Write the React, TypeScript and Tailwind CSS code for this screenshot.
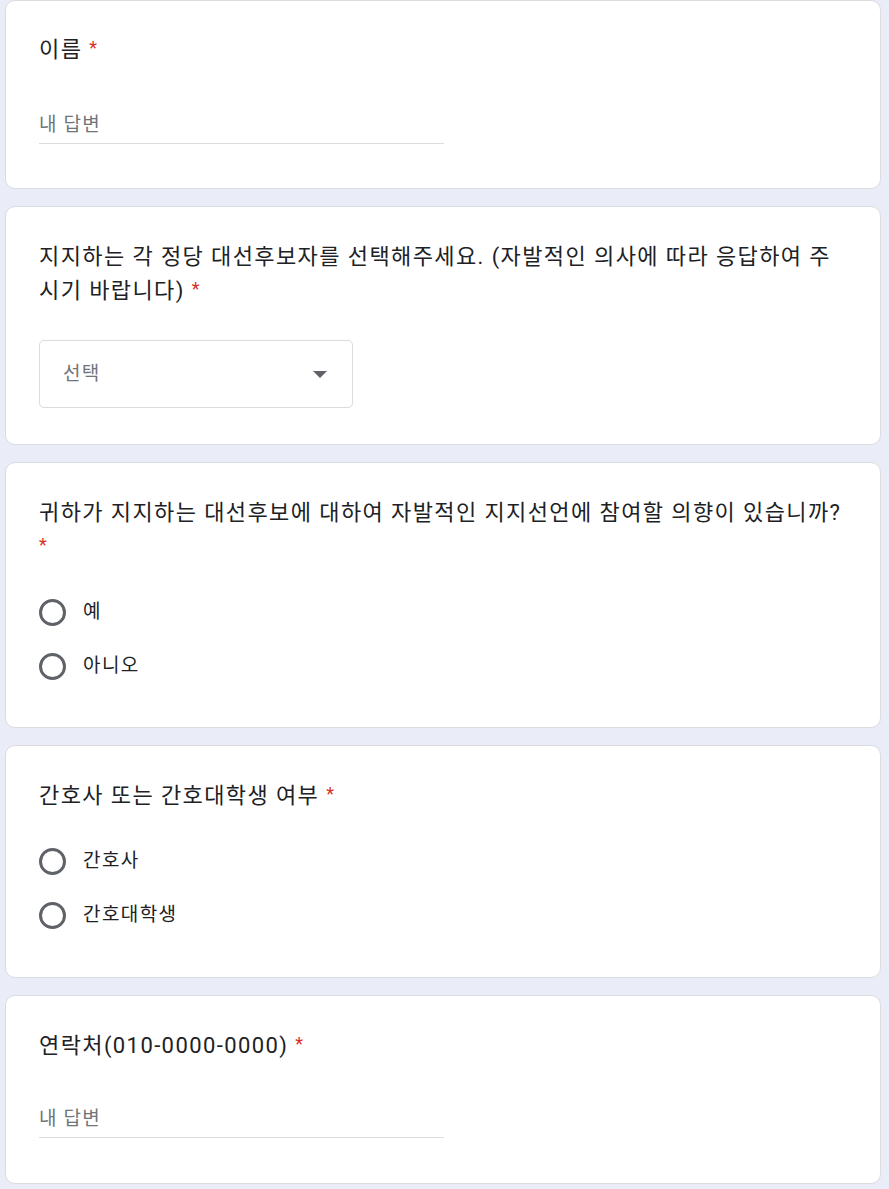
const FONT = "font-['Roboto','Noto_Sans_CJK_KR',sans-serif]";

function Title({ children }: { children: React.ReactNode }) {
  return (
    <div className="text-[22px] leading-[34px] tracking-[1.4px] text-[#202124]">
      {children}{" "}
      <span className="text-[#d93025] text-[18px] leading-none relative top-[-3px]">*</span>
    </div>
  );
}

function ShortAnswer({ mt }: { mt: string }) {
  return (
    <div
      className={`${mt} h-[44px] w-[405px] flex items-end pb-[6px] leading-[24px] border-b border-[#dadce0] text-[19px] text-[#70757a] tracking-[1.2px]`}
    >
      내 답변
    </div>
  );
}

function Radio({ label }: { label: string }) {
  return (
    <div className="h-[54px] flex items-center">
      <span className="w-[27px] h-[27px] rounded-full border-[3px] border-[#5f6368] shrink-0" />
      <span className="ml-[17px] text-[19px] text-[#202124] tracking-[1.4px]">{label}</span>
    </div>
  );
}

export default function App() {
  return (
    <div className={`${FONT} min-h-[1189px] bg-[#eaedf7] pl-[5px] pr-[8px] flex flex-col gap-[17px]`}>
      <div className="bg-white border border-[#dadce0] rounded-[10px] pl-[33px] pr-[33px] pt-[32px] pb-[44px]">
        <Title>이름</Title>
        <ShortAnswer mt="mt-[33px]" />
      </div>

      <div className="bg-white border border-[#dadce0] rounded-[10px] pl-[33px] pr-[33px] pt-[33px] pb-[36px]">
        <Title>지지하는 각 정당 대선후보자를 선택해주세요. (자발적인 의사에 따라 응답하여 주시기 바랍니다)</Title>
        <div className="mt-[32px] w-[314px] h-[68px] border border-[#dadce0] rounded-[5px] flex items-center justify-between pl-[23px] pr-[25px]">
          <span className="text-[19px] text-[#70757a] tracking-[1.2px]">선택</span>
          <svg width="14" height="7" viewBox="0 0 14 7">
            <path d="M0 0 L14 0 L7 7 Z" fill="#5f6368" />
          </svg>
        </div>
      </div>

      <div className="bg-white border border-[#dadce0] rounded-[10px] pl-[33px] pr-[33px] pt-[33px] pb-[34px]">
        <Title>귀하가 지지하는 대선후보에 대하여 자발적인 지지선언에 참여할 의향이 있습니까?</Title>
        <div className="mt-[21px] flex flex-col">
          <Radio label="예" />
          <Radio label="아니오" />
        </div>
      </div>

      <div className="bg-white border border-[#dadce0] rounded-[10px] pl-[33px] pr-[33px] pt-[33px] pb-[35px]">
        <Title>간호사 또는 간호대학생 여부</Title>
        <div className="mt-[21px] flex flex-col">
          <Radio label="간호사" />
          <Radio label="간호대학생" />
        </div>
      </div>

      <div className="bg-white border border-[#dadce0] rounded-[10px] pl-[33px] pr-[33px] pt-[33px] pb-[45px]">
        <Title>연락처(010-0000-0000)</Title>
        <ShortAnswer mt="mt-[31px]" />
      </div>
    </div>
  );
}
